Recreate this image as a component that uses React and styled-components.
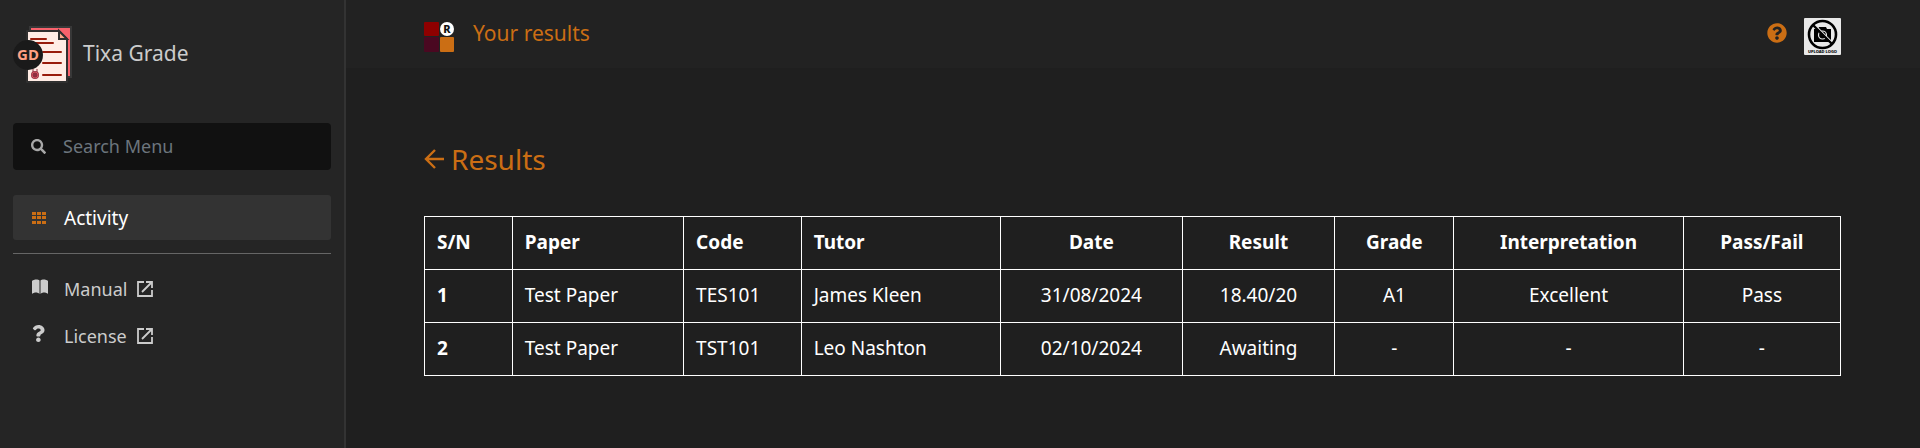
import styled, { createGlobalStyle } from "styled-components";

import { FaSearch, FaQuestion, FaQuestionCircle } from "react-icons/fa";

const menuLinks = [
  { label: "Manual", icon: "book" },
  { label: "License", icon: "question" },
];

const columns = [
  { title: "S/N", width: "6.2%" },
  { title: "Paper", width: "12.1%" },
  { title: "Code", width: "8.3%" },
  { title: "Tutor", width: "14.1%" },
  { title: "Date", width: "12.8%", center: true },
  { title: "Result", width: "10.8%", center: true },
  { title: "Grade", width: "8.4%", center: true },
  { title: "Interpretation", width: "16.2%", center: true },
  { title: "Pass/Fail", width: "11.1%", center: true },
];

const results = [
  ["1", "Test Paper", "TES101", "James Kleen", "31/08/2024", "18.40/20", "A1", "Excellent", "Pass"],
  ["2", "Test Paper", "TST101", "Leo Nashton", "02/10/2024", "Awaiting", "-", "-", "-"],
];

export default function App() {
  return (
    <>
      <GlobalStyle />
      <Page>
        <Sidebar />
        <Main>
          <TopBar />
          <ResultsPage />
        </Main>
      </Page>
    </>
  );
}

function Sidebar() {
  return (
    <StyledSidebar>
      <Brand href="#">
        <GradeLogo />
        <span>Tixa Grade</span>
      </Brand>

      <SearchBox>
        <IconSlot>
          <FaSearch size={15} color="#a8a8a8" />
        </IconSlot>
        <input type="text" placeholder="Search Menu" aria-label="Search Menu" />
      </SearchBox>

      <nav>
        <ActiveLink href="#">
          <IconSlot>
            <GridIcon />
          </IconSlot>
          Activity
        </ActiveLink>
        <Divider />
        {menuLinks.map(({ label, icon }) => (
          <MenuLink href="#" key={label}>
            <IconSlot $raised>
              {icon === "book" ? (
                <BookIcon />
              ) : (
                <FaQuestion size={17} preserveAspectRatio="xMinYMid meet" />
              )}
            </IconSlot>
            {label}
            <ExternalIcon />
          </MenuLink>
        ))}
      </nav>
    </StyledSidebar>
  );
}

function TopBar() {
  return (
    <StyledHeader>
      <ResultsLogo />
      <h1>Your results</h1>
      <HelpButton type="button" aria-label="Help">
        <FaQuestionCircle size={20} />
      </HelpButton>
      <AvatarButton type="button" aria-label="Upload logo">
        <UploadLogo />
      </AvatarButton>
    </StyledHeader>
  );
}

function ResultsPage() {
  return (
    <Content>
      <BackLink href="#">
        <ArrowIcon />
        <h2>Results</h2>
      </BackLink>

      <Table>
        <colgroup>
          {columns.map((column) => (
            <Col key={column.title} $width={column.width} />
          ))}
        </colgroup>
        <thead>
          <tr>
            {columns.map((column) => (
              <HeadCell key={column.title} scope="col" $center={column.center}>
                {column.title}
              </HeadCell>
            ))}
          </tr>
        </thead>
        <tbody>
          {results.map(([number, ...cells]) => (
            <tr key={number}>
              <HeadCell scope="row">{number}</HeadCell>
              {cells.map((cell, index) => (
                <Cell key={index} $center={columns[index + 1].center}>
                  {cell}
                </Cell>
              ))}
            </tr>
          ))}
        </tbody>
      </Table>
    </Content>
  );
}

function GradeLogo() {
  return (
    <svg width="60" height="60" viewBox="0 0 60 60" aria-hidden="true">
      <path d="M17 3H58V53H17Z" fill="#f9626c" stroke="#383838" strokeWidth="2" />
      <path
        d="M14 7H46L54 15V58H14Z"
        fill="#ffece5"
        stroke="#303030"
        strokeWidth="2"
        strokeLinejoin="round"
      />
      <path d="M46 7V15H54Z" fill="#ffa98c" stroke="#303030" strokeWidth="2" />
      <path
        d="M18 15H33M21 19H40M30 28H48M30 39H48M30 51H48"
        stroke="#981b0b"
        strokeWidth="2"
        strokeLinecap="round"
      />
      <path d="M20 45V49M24 45V49" stroke="#8f3040" strokeWidth="1" />
      <circle cx="22" cy="51" r="4" fill="#8f3040" />
      <circle cx="22" cy="51" r="3" fill="none" stroke="#d65561" strokeWidth="1" />
      <circle cx="15" cy="31" r="15" fill="#1a1a1a" />
      <text
        x="15"
        y="36"
        textAnchor="middle"
        fill="#ffa084"
        fontFamily="Noto Sans, sans-serif"
        fontSize="15"
        fontWeight="700"
      >
        GD
      </text>
    </svg>
  );
}

function ResultsLogo() {
  return (
    <svg width="30" height="30" viewBox="0 0 30 30" aria-hidden="true">
      <rect width="15" height="14" rx="1" fill="#8e0000" />
      <rect y="15" width="15" height="15" rx="1" fill="#4a0821" />
      <rect x="16" y="15" width="14" height="15" rx="1" fill="#cb6e14" />
      <circle cx="23" cy="7" r="7" fill="#ffffff" />
      <text
        x="23"
        y="11"
        textAnchor="middle"
        fill="#111111"
        fontFamily="Noto Sans, sans-serif"
        fontSize="11"
        fontWeight="800"
      >
        R
      </text>
    </svg>
  );
}

function UploadLogo() {
  return (
    <svg width="37" height="37" viewBox="0 0 37 37" aria-hidden="true">
      <rect width="37" height="37" rx="1" fill="#e9e9e9" />
      <path d="M10 11H14L15 9H22L23 11H27V24H10Z" fill="#000000" />
      <circle cx="18.5" cy="17" r="4" fill="none" stroke="#e9e9e9" strokeWidth="1.2" />
      <path d="M10 6L29 25" stroke="#e9e9e9" strokeWidth="1.2" />
      <circle cx="18.5" cy="16.5" r="13.5" fill="none" stroke="#000000" strokeWidth="2.6" />
      <path d="M9 7L28 26" stroke="#000000" strokeWidth="2.4" />
      <text
        x="18.5"
        y="35"
        textAnchor="middle"
        fill="#000000"
        fontFamily="Noto Sans, sans-serif"
        fontSize="4"
        fontWeight="800"
      >
        UPLOAD LOGO
      </text>
    </svg>
  );
}

function GridIcon() {
  return (
    <svg width="14" height="12" viewBox="0 0 14 12" fill="#cb6e14" aria-hidden="true">
      {[0, 5, 10].map((x) =>
        [0, 4, 9].map((y) => <rect key={`${x}-${y}`} x={x} y={y} width="4" height="3" />)
      )}
    </svg>
  );
}

function BookIcon() {
  return (
    <svg width="16" height="16" viewBox="0 0 16 16" fill="currentColor" aria-hidden="true">
      <path d="M0 2C2 0 6 0 7.5 1.5V15C6 13 2 13 0 15Z" />
      <path d="M16 2C14 0 10 0 8.5 1.5V15C10 13 14 13 16 15Z" />
    </svg>
  );
}

function ExternalIcon() {
  return (
    <svg
      width="16"
      height="16"
      viewBox="0 0 16 16"
      fill="none"
      stroke="currentColor"
      strokeWidth="1.8"
      aria-hidden="true"
    >
      <path d="M7 1H1V15H15V9M9 1H15V7M15 1L5 11" />
    </svg>
  );
}

function ArrowIcon() {
  return (
    <svg
      width="20"
      height="20"
      viewBox="0 0 20 20"
      fill="none"
      stroke="currentColor"
      strokeWidth="2.4"
      aria-hidden="true"
    >
      <path d="M20 10H2M11 1L2 10L11 19" />
    </svg>
  );
}

const GlobalStyle = createGlobalStyle`
  * {
    box-sizing: border-box;
  }
  body {
    margin: 0;
    background-color: #1f1f1f;
    color: #ffffff;
    font: 400 19px/28px "Noto Sans", sans-serif;
  }
  h1, h2 {
    margin: 0;
    font-weight: 400;
  }
  a {
    color: inherit;
    text-decoration: none;
  }
`;

const Page = styled.div`
  display: flex;
  min-height: 100vh;
`;

const StyledSidebar = styled.aside`
  flex: 0 0 346px;
  padding: 24px 13px;
  background-color: #252525;
  border-right: 2px solid #333333;
  color: #cccccc;
`;

const Brand = styled.a`
  display: flex;
  align-items: center;
  gap: 10px;
  margin-bottom: 39px;
  font-size: 21px;
  span {
    padding-bottom: 3px;
  }
`;

const IconSlot = styled.span`
  display: flex;
  flex: 0 0 32px;
  padding-bottom: ${({ $raised }) => ($raised ? "4px" : "0")};
`;

const SearchBox = styled.label`
  display: flex;
  align-items: center;
  height: 47px;
  margin-bottom: 25px;
  padding: 0 18px;
  border-radius: 4px;
  background-color: #111111;
  font-size: 18px;
  input {
    width: 100%;
    padding: 0 0 2px;
    border: none;
    outline: none;
    background: transparent;
    color: #cccccc;
    font: inherit;
  }
  input::placeholder {
    color: #6c757d;
    opacity: 1;
  }
`;

const MenuLink = styled.a`
  display: flex;
  align-items: center;
  height: 47px;
  padding: 0 19px;
  font-size: 18px;
  > svg {
    margin-left: 10px;
  }
`;

const ActiveLink = styled(MenuLink)`
  height: 45px;
  border-radius: 3px;
  background-color: #333333;
  color: #ffffff;
  font-size: 19px;
`;

const Divider = styled.hr`
  height: 1px;
  margin: 13px 0 11px;
  border: none;
  background-color: #666666;
`;

const Main = styled.main`
  flex: 1;
  min-width: 0;
`;

const StyledHeader = styled.header`
  display: flex;
  align-items: center;
  height: 68px;
  padding: 5px 79px 0 78px;
  background-color: #222222;
  color: #cb6e14;
  h1 {
    margin: 0 auto 0 19px;
    padding-bottom: 7px;
    font-size: 21px;
    line-height: 32px;
  }
`;

const IconButton = styled.button`
  display: flex;
  padding: 0;
  border: none;
  background: transparent;
  color: #cb6e14;
  cursor: pointer;
`;

const HelpButton = styled(IconButton)`
  padding-bottom: 7px;
`;

const AvatarButton = styled(IconButton)`
  margin-left: 17px;
`;

const Content = styled.section`
  padding: 71px 79px 72px 78px;
`;

const BackLink = styled.a`
  display: inline-flex;
  align-items: center;
  gap: 7px;
  margin-bottom: 37px;
  color: #cb6e14;
  h2 {
    font-size: 28px;
    line-height: 40px;
  }
`;

const Table = styled.table`
  width: 100%;
  table-layout: fixed;
  border-collapse: collapse;
`;

const Col = styled.col`
  width: ${({ $width }) => $width};
`;

const Cell = styled.td`
  padding: 11px 12px 13px;
  border: 1px solid #ffffff;
  text-align: ${({ $center }) => ($center ? "center" : "left")};
`;

const HeadCell = styled(Cell).attrs({ as: "th" })`
  font-weight: 700;
`;
